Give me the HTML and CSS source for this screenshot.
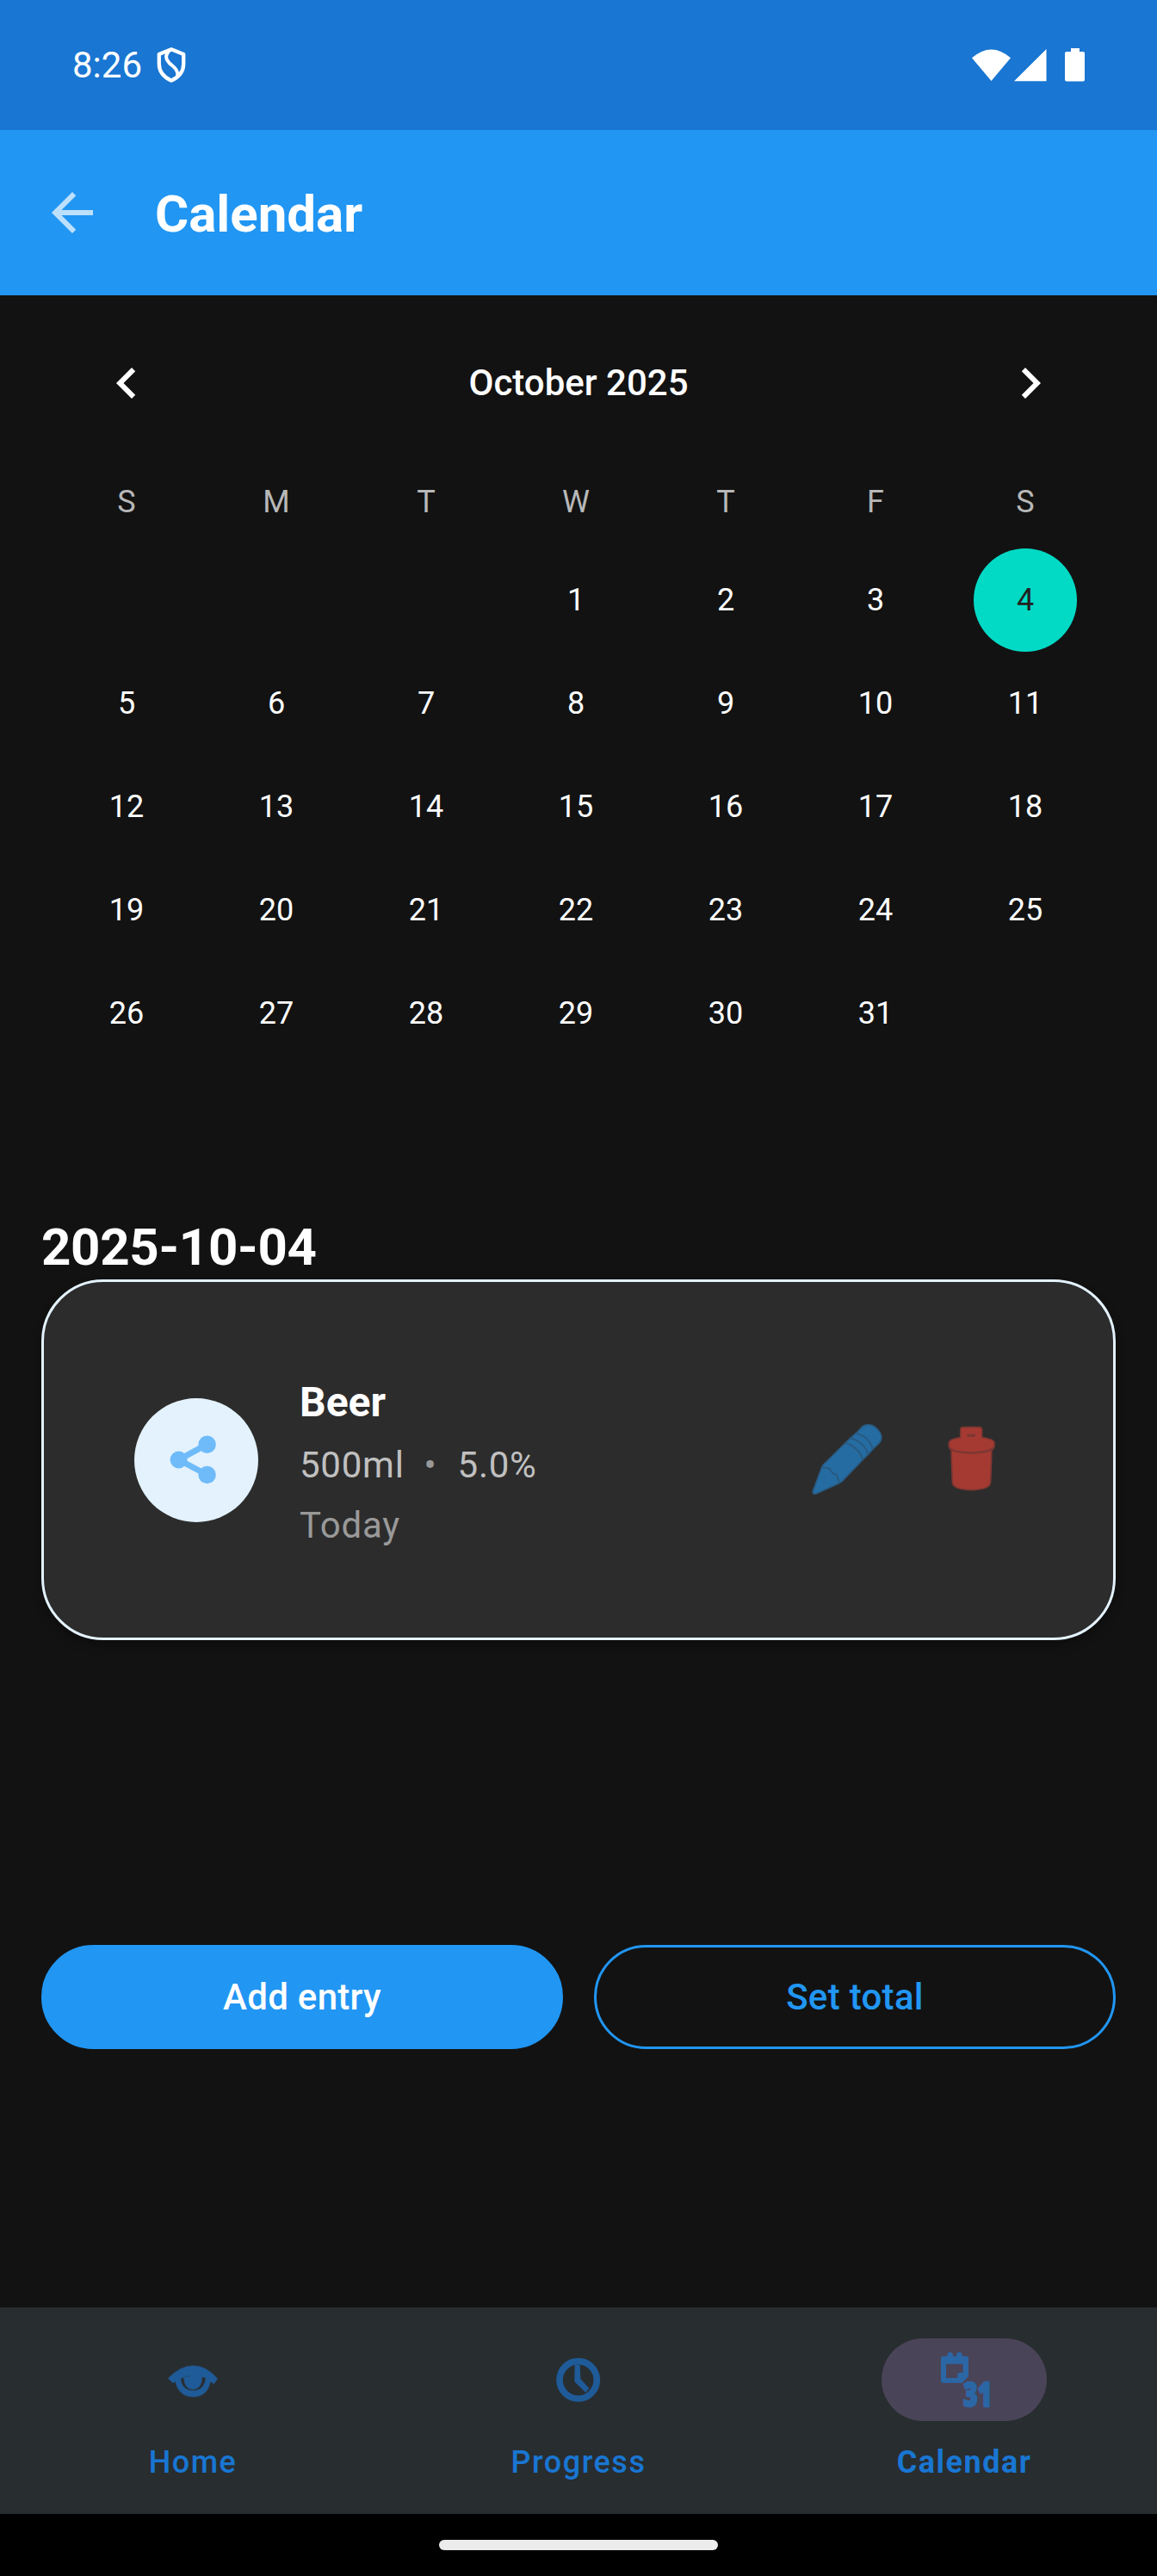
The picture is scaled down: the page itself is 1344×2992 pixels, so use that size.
FILE: index.html
```html
<!DOCTYPE html>
<html lang="en">
<head>
<meta charset="utf-8">
<title>Calendar</title>
<link rel="stylesheet" href="styles.css">
</head>
<body>
<div class="status-bar">
  <div class="status-left">
    <span>8:26</span>
    <svg class="shield" viewBox="0 0 102 124">
      <path d="M51 7 94 24V58C94 86 74 106 51 117C28 106 8 86 8 58V24Z" fill="none" stroke="#fff" stroke-width="13" stroke-linejoin="round"/>
      <path d="M48 8C30 22 28 38 44 55C60 70 74 76 73 100" fill="none" stroke="#fff" stroke-width="12"/>
    </svg>
  </div>
  <svg class="status-icons" viewBox="0 0 131 40">
    <path d="M0 12.2Q22.5-7.4 45 12.2L22.5 39ZM86.5 2V39.3H49Z" fill="#fff"/>
    <path d="M115 1h10v4h4a2 2 0 0 1 2 2v30.500a2 2 0 0 1-2 2h-19a2 2 0 0 1-2-2V7a2 2 0 0 1 2-2h5z" fill="#fff"/>
  </svg>
</div>
<header class="toolbar">
  <svg class="icon back" viewBox="0 0 24 24"><path fill="#fff" fill-opacity=".7" d="M20 11H7.830l5.590-5.590L12 4l-8 8 8 8 1.410-1.410L7.830 13H20z"/></svg>
  <h1>Calendar</h1>
</header>
<main>
  <section class="calendar">
    <div class="month">
      <svg class="icon" viewBox="0 0 24 24"><path fill="#fff" d="M15.410 7.410 14 6l-6 6 6 6 1.410-1.410L10.830 12z"/></svg>
      <span>October 2025</span>
      <svg class="icon" viewBox="0 0 24 24"><path fill="#fff" d="M10 6 8.590 7.410 13.170 12l-4.580 4.590L10 18l6-6z"/></svg>
    </div>
    <div class="weekdays"><span>S</span><span>M</span><span>T</span><span>W</span><span>T</span><span>F</span><span>S</span></div>
    <div class="days">
      <span class="first">1</span><span>2</span><span>3</span><span class="selected">4</span>
      <span>5</span><span>6</span><span>7</span><span>8</span><span>9</span><span>10</span><span>11</span>
      <span>12</span><span>13</span><span>14</span><span>15</span><span>16</span><span>17</span><span>18</span>
      <span>19</span><span>20</span><span>21</span><span>22</span><span>23</span><span>24</span><span>25</span>
      <span>26</span><span>27</span><span>28</span><span>29</span><span>30</span><span>31</span>
    </div>
  </section>
  <h2>2025-10-04</h2>
  <article class="card">
    <div class="avatar">
      <svg viewBox="0 0 72 72" width="72" height="72">
        <path d="M48.600 17.700 15.600 35.500 48.600 53" fill="none" stroke="#6fbbfa" stroke-width="7"/>
        <g fill="#6fbbfa"><circle cx="15.600" cy="35.500" r="10"/><circle cx="48.600" cy="17.700" r="10.200"/><circle cx="48.600" cy="53" r="10.200"/></g>
      </svg>
    </div>
    <div class="entry">
      <strong>Beer</strong>
      <p class="detail"><span>500ml</span><span class="dot">•</span><span>5.0%</span></p>
      <p class="when">Today</p>
    </div>
    <div class="actions">
      <svg viewBox="72 106 360 360">
        <g fill="#256ca3" stroke="#295a80" stroke-width="5" stroke-linejoin="round">
          <path d="M133 394 164 310 170 301 246 226 266 207 285 191 302 172C318 158 340 160 356 176C373 192 376 210 366 224L341 248 325 266 306 285 234 360 225 366 143 403Q131 405 133 394Z"/>
          <path fill="none" d="M164 310 191 315C195 325 203 334 216 338L225 366M246 226C274 233 302 259 306 285M262 209C292 215 320 240 324 266M280 192C309 196 336 220 341 247" stroke-width="6"/>
        </g>
      </svg>
      <svg viewBox="504 106 360 360">
        <g fill="#a43a32" stroke="#7d3632" stroke-width="5" stroke-linejoin="round">
          <path d="M615 252H756L752 362Q751 389 685 390Q620 389 619 362Z"/>
          <path d="M647 207V181Q647 171 658 171H711Q722 171 722 181V207Q765 213 765 225V240Q758 259 685 261Q613 259 607 240V225Q608 213 647 207Z"/>
          <path d="M670 195H698V205H670Z" fill="#7d3632" stroke="none"/>
          <path d="M609 242Q620 259 685 260Q750 259 763 242" fill="none" stroke-width="7"/>
        </g>
      </svg>
    </div>
  </article>
  <div class="buttons">
    <button class="filled">Add entry</button>
    <button class="outlined">Set total</button>
  </div>
</main>
<nav>
  <a><span class="pill"><svg class="icon" viewBox="24 -6 216 216">
    <g stroke="#24517f" stroke-width="2" stroke-linejoin="round">
      <path fill="#1f5b98" fill-rule="evenodd" d="M46 97Q88 53 133 53Q178 53 218 98L206 116L193 109C187 143 166 162 133 162C100 162 79 143 71 109L62 113ZM90 97C91 125 108 140 133 140C158 140 174 125 177 96Q170 92 164 93Q164 134 132 136Q101 134 101 94Z"/>
      <path fill="none" stroke="#24466a" stroke-width="3" d="M103 92Q114 84 122 95"/>
    </g></svg></span><span>Home</span></a>
  <a><span class="pill"><svg class="icon" viewBox="18 -6 216 216">
    <circle cx="125" cy="103" r="65" fill="none" stroke="#1f5b98" stroke-width="23"/>
    <path d="M113 50H131L133 99 163 132 151 147 112 109Z" fill="#1f5b98"/></svg></span><span>Progress</span></a>
  <a class="active"><span class="pill"><svg class="icon" viewBox="252 174 216 216">
    <path fill="#2b66a5" fill-rule="evenodd" d="M286 200H301V195Q302 186 311 186Q320 186 321 195V200H333V195Q334 186 343 186Q352 186 353 195V200H367Q375 200 375 208V270L353 293H287Q279 293 279 285V208Q279 200 286 200ZM297 227V276H337V264Q337 257 345 257H356V227Z"/>
    <text class="date-glyph" x="357" y="374" textLength="100" lengthAdjust="spacingAndGlyphs">31</text></svg></span><span>Calendar</span></a>
</nav>
<div class="gesture"><span class="handle"></span></div>
</body>
</html>
```
FILE: styles.css
```css
* { box-sizing: border-box; margin: 0; padding: 0; }
body {
  display: flex;
  flex-direction: column;
  width: 1344px;
  height: 2992px;
  background: #121212;
  color: #fff;
  font-family: Roboto, sans-serif;
  font-size: 42px;
}
svg { display: block; flex: none; overflow: visible; }
.icon { width: 72px; height: 72px; }

.status-bar {
  height: 151px;
  padding: 0 84px;
  display: flex;
  justify-content: space-between;
  align-items: center;
  background: #1976d2;
}
.status-left { display: flex; align-items: center; gap: 17px; }
.shield { width: 34px; height: 41px; }
.status-icons { width: 131px; height: 40px; margin-top: -2px; }

.toolbar {
  height: 192px;
  padding: 0 48px;
  display: flex;
  align-items: center;
  gap: 60px;
  background: #2196f3;
}
h1, h2 { font-size: 60px; font-weight: 700; }
h1 { padding-top: 3px; }

main { flex: 1; padding: 0 48px; }
.calendar { padding: 30px 18px 0 12px; }
.month {
  height: 144px;
  margin: 0 45px 0 51px;
  display: flex;
  align-items: center;
  justify-content: space-between;
  font-weight: 500;
}
.month span { padding-bottom: 2px; }
.weekdays, .days {
  display: grid;
  grid-template-columns: repeat(7, 174px);
  justify-items: center;
  font-size: 36px;
}
.weekdays { height: 120px; line-height: 132px; color: #b8b8b8; }
.days { grid-auto-rows: 120px; line-height: 120px; }
.first { grid-column: 4; }
.selected {
  width: 120px;
  border-radius: 50%;
  text-align: center;
  background: #03dac6;
  color: #212121;
}

h2 { margin-top: 175px; padding-bottom: 1px; line-height: 73px; letter-spacing: -.3px; }
.card {
  height: 419px;
  padding: 0 105px;
  display: flex;
  align-items: center;
  gap: 48px;
  border: 3px solid #e3f2fd;
  border-radius: 72px;
  background: #2c2c2c;
  box-shadow: 0 6px 12px rgba(0, 0, 0, .3);
}
.avatar {
  width: 144px;
  height: 144px;
  display: grid;
  place-items: center;
  border-radius: 50%;
  background: #e3f2fd;
}
.entry { flex: 1; padding-top: 5px; letter-spacing: .75px; }
.entry strong { display: block; font-size: 48px; line-height: 78px; letter-spacing: 0; }
.detail { display: flex; line-height: 68px; color: #c0c0c0; }
.dot { margin: 0 24px 0 23px; color: #999; }
.when { line-height: 71px; color: #999; }
.actions { display: flex; gap: 24px; }
.actions svg { width: 120px; height: 120px; }

.buttons { margin-top: 354px; display: flex; gap: 36px; }
.buttons button {
  flex: 1;
  height: 121px;
  border: 3px solid #2196f3;
  border-radius: 61px;
  font: 500 42px Roboto, sans-serif;
  letter-spacing: .3px;
}
.filled { background: #2196f3; color: #fff; }
.outlined { background: transparent; color: #2196f3; }

nav {
  height: 240px;
  padding-top: 36px;
  display: flex;
  background: #282d30;
  color: #1976d2;
  font-size: 36px;
  font-weight: 500;
  letter-spacing: 1.5px;
}
nav a { flex: 1; display: flex; flex-direction: column; align-items: center; gap: 24px; line-height: 48px; }
.pill { width: 192px; height: 96px; display: grid; place-items: center; border-radius: 48px; }
.active { font-weight: 700; }
.active .pill { background: #4a4458; }
.date-glyph {
  font-family: "Open Sans", sans-serif;
  font-size: 115px;
  font-weight: 800;
  letter-spacing: 0;
  fill: #2b66a5;
  stroke: #2b66a5;
  stroke-width: 7px;
  stroke-linejoin: round;
}
.gesture { height: 72px; padding-top: 30px; background: #000; }
.handle { display: block; width: 324px; height: 12px; margin: 0 auto; border-radius: 6px; background: #ececec; }
```
